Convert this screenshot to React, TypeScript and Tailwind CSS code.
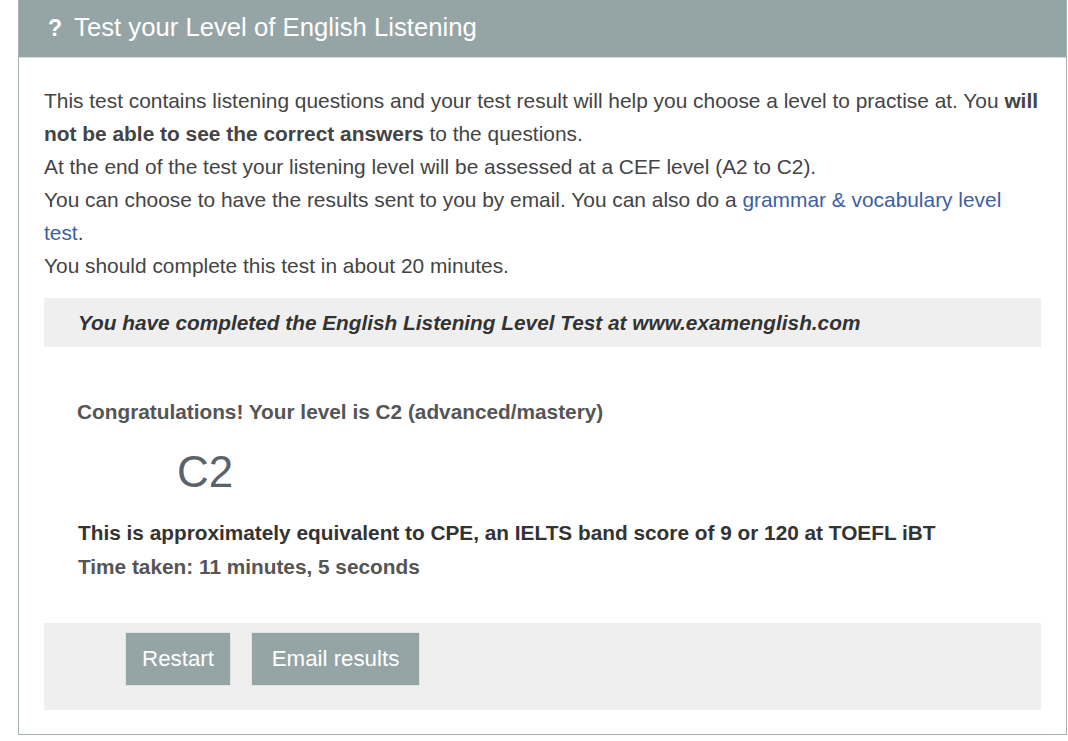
export default function App() {
  return (
    <div className="w-[1068px] h-[741px] bg-white pl-[18px] font-['Liberation_Sans',Arial,sans-serif]">
      <div className="w-[1049px] border-x border-b border-[#a7b3b3] bg-white">
        <div className="h-[58px] bg-[#95a5a6] border-b border-[#d3dcdc] flex items-center pl-[29px] pb-[1px] text-white">
          <span className="text-[23px] font-bold leading-none mr-[12px]">?</span>
          <span className="text-[25.7px] leading-none">Test your Level of English Listening</span>
        </div>
        <div className="px-[25px] pt-[26px] pb-[24px]">
          <p className="text-[20.9px] leading-[33px] text-[#444]">
            This test contains listening questions and your test result will help you choose a level to practise at. You{" "}
            <b>will not be able to see the correct answers</b> to the questions.
            <br />
            At the end of the test your listening level will be assessed at a CEF level (A2 to C2).
            <br />
            You can choose to have the results sent to you by email. You can also do a{" "}
            <a className="text-[#3d5fa3]">grammar &amp; vocabulary level test</a>.
            <br />
            You should complete this test in about 20 minutes.
          </p>
          <div className="mt-[16px] h-[49px] bg-[#efefef] flex items-center pl-[34px] text-[20.8px] font-bold italic text-[#333]">
            You have completed the English Listening Level Test at www.examenglish.com
          </div>
          <div className="mt-[53px] pl-[33px] text-[20.8px] leading-[24px] font-bold text-[#555]">
            Congratulations! Your level is C2 (advanced/mastery)
          </div>
          <div className="mt-[23px] pl-[133px] text-[44px] leading-[50px] text-[#5a636b]">C2</div>
          <div className="mt-[19px] pl-[34px] text-[20.8px] leading-[34px] font-bold">
            <div className="text-[#333]">This is approximately equivalent to CPE, an IELTS band score of 9 or 120 at TOEFL iBT</div>
            <div className="text-[#555]">Time taken: 11 minutes, 5 seconds</div>
          </div>
          <div className="mt-[39px] h-[87px] bg-[#efefef] flex items-start gap-[20px] pl-[81px] pt-[9px]">
            <button className="h-[54px] w-[106px] bg-[#95a5a6] border border-[#dfe5e5] text-white text-[22.3px]">Restart</button>
            <button className="h-[54px] w-[169px] bg-[#95a5a6] border border-[#dfe5e5] text-white text-[22.3px]">Email results</button>
          </div>
        </div>
      </div>
    </div>
  );
}
